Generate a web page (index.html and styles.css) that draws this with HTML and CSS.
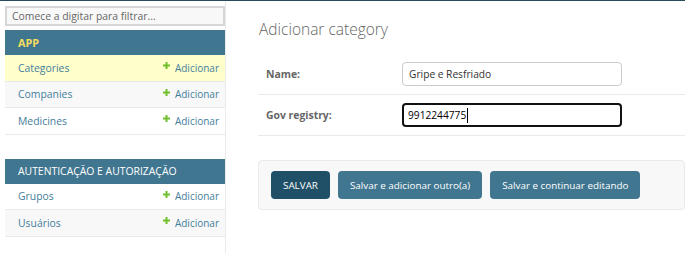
FILE: index.html
```html
<!DOCTYPE html>
<html lang="pt-br">
<head>
    <meta charset="UTF-8">
    <meta name="viewport" content="width=device-width, initial-scale=1.0">
    <title>Adicionar category</title>
    <link rel="stylesheet" href="styles.css">
</head>
<body>
    <div class="topline"></div>
    <div class="layout">
        <nav class="sidebar">
            <input class="nav-filter" type="search" placeholder="Comece a digitar para filtrar...">

            <div class="app-module current-app">
                <div class="caption">APP</div>
                <div class="model-row current-model">
                    <a href="#" class="model-link">Categories</a>
                    <a href="#" class="addlink"><svg width="7" height="7" viewBox="0 0 7 7"><path d="M2.5 0h2v2.5H7v2H4.5V7h-2V4.5H0v-2h2.5z" fill="#70bf2b"/></svg>Adicionar</a>
                </div>
                <div class="model-row alt">
                    <a href="#" class="model-link">Companies</a>
                    <a href="#" class="addlink"><svg width="7" height="7" viewBox="0 0 7 7"><path d="M2.5 0h2v2.5H7v2H4.5V7h-2V4.5H0v-2h2.5z" fill="#70bf2b"/></svg>Adicionar</a>
                </div>
                <div class="model-row">
                    <a href="#" class="model-link">Medicines</a>
                    <a href="#" class="addlink"><svg width="7" height="7" viewBox="0 0 7 7"><path d="M2.5 0h2v2.5H7v2H4.5V7h-2V4.5H0v-2h2.5z" fill="#70bf2b"/></svg>Adicionar</a>
                </div>
            </div>

            <div class="app-module">
                <div class="caption">AUTENTICAÇÃO E AUTORIZAÇÃO</div>
                <div class="model-row">
                    <a href="#" class="model-link">Grupos</a>
                    <a href="#" class="addlink"><svg width="7" height="7" viewBox="0 0 7 7"><path d="M2.5 0h2v2.5H7v2H4.5V7h-2V4.5H0v-2h2.5z" fill="#70bf2b"/></svg>Adicionar</a>
                </div>
                <div class="model-row alt">
                    <a href="#" class="model-link">Usuários</a>
                    <a href="#" class="addlink"><svg width="7" height="7" viewBox="0 0 7 7"><path d="M2.5 0h2v2.5H7v2H4.5V7h-2V4.5H0v-2h2.5z" fill="#70bf2b"/></svg>Adicionar</a>
                </div>
            </div>
        </nav>

        <main class="content">
            <h1>Adicionar category</h1>
            <form>
                <div class="form-row">
                    <label for="id_name">Name:</label>
                    <input type="text" id="id_name" class="field" value="Gripe e Resfriado">
                </div>
                <div class="form-row">
                    <label for="id_gov_registry">Gov registry:</label>
                    <div class="field focused">9912244775<span class="caret"></span></div>
                </div>
                <div class="submit-row">
                    <button type="submit" class="btn default">SALVAR</button>
                    <button type="submit" class="btn">Salvar e adicionar outro(a)</button>
                    <button type="submit" class="btn">Salvar e continuar editando</button>
                </div>
            </form>
        </main>
    </div>
</body>
</html>
```

FILE: styles.css
```css
body {
    margin: 0;
    font-family: "Open Sans", "DejaVu Sans", sans-serif;
    font-size: 10.4px;
    color: #333333;
    background-color: #ffffff;
    overflow: hidden;
}
.topline {
    height: 1px;
    background-color: #264b5d;
}
.layout {
    display: flex;
    height: 252px;
}
.sidebar {
    width: 220px;
    padding-left: 5px;
    border-right: 1px solid #eaeaea;
    flex-shrink: 0;
}
.nav-filter {
    display: block;
    box-sizing: border-box;
    width: 220px;
    height: 20px;
    margin-top: 5px;
    padding: 0 5px;
    border: 2px solid #d6d6d6;
    background-color: #f8f8f8;
    font-family: inherit;
    font-size: 10.4px;
    color: #333333;
    outline: none;
}
.nav-filter::placeholder {
    color: #666666;
}
.app-module {
    margin-top: 4px;
    margin-bottom: 24px;
}
.caption {
    height: 25px;
    line-height: 25px;
    padding-left: 13px;
    background-color: #417690;
    color: #ffffff;
    font-size: 10.4px;
}
.current-app .caption {
    color: #f5dd5d;
    font-weight: bold;
    font-size: 10.8px;
}
.model-row {
    display: flex;
    justify-content: space-between;
    align-items: center;
    height: 25.5px;
    padding: 0 6px 0 13px;
    border-bottom: 1px solid #eaeaea;
    background-color: #ffffff;
}
.model-row.alt {
    background-color: #f8f8f8;
}
.model-row.current-model {
    background-color: #ffffcc;
}
.model-row a {
    color: #447e9b;
    text-decoration: none;
}
.addlink {
    display: flex;
    align-items: center;
    font-size: 10px;
}
.addlink svg {
    margin-right: 5px;
    margin-top: -4px;
}
.content {
    flex: 1;
    padding-left: 32px;
}
h1 {
    margin: 17px 0 14px 1px;
    font-size: 15.5px;
    font-weight: 300;
    line-height: 22px;
    color: #666666;
}
.form-row {
    display: flex;
    align-items: center;
    padding: 8px 0 8px 8px;
    border-bottom: 1px solid #eaeaea;
}
.form-row label {
    width: 136px;
    font-weight: bold;
    color: #666666;
    font-size: 10.4px;
}
.field {
    box-sizing: border-box;
    width: 220px;
    height: 24px;
    padding: 0 6px;
    border: 1px solid #cccccc;
    border-radius: 4px;
    font-family: inherit;
    font-size: 10.2px;
    color: #333333;
    display: flex;
    align-items: center;
}
.field.focused {
    border: 2px solid #111111;
    padding: 0 4px;
    color: #000000;
}
.caret {
    display: inline-block;
    width: 1px;
    height: 15px;
    background-color: #000000;
    margin-left: 1px;
}
.submit-row {
    display: flex;
    gap: 8px;
    margin-top: 24px;
    padding: 10px 12px;
    border: 1px solid #eaeaea;
    border-radius: 4px;
    background-color: #f8f8f8;
}
.btn {
    height: 28px;
    padding: 0 12px;
    border: none;
    border-radius: 4px;
    background-color: #417690;
    color: #ffffff;
    font-family: inherit;
    font-size: 9.85px;
    cursor: pointer;
}
.btn.default {
    background-color: #205067;
    padding: 0 12px;
}
```
